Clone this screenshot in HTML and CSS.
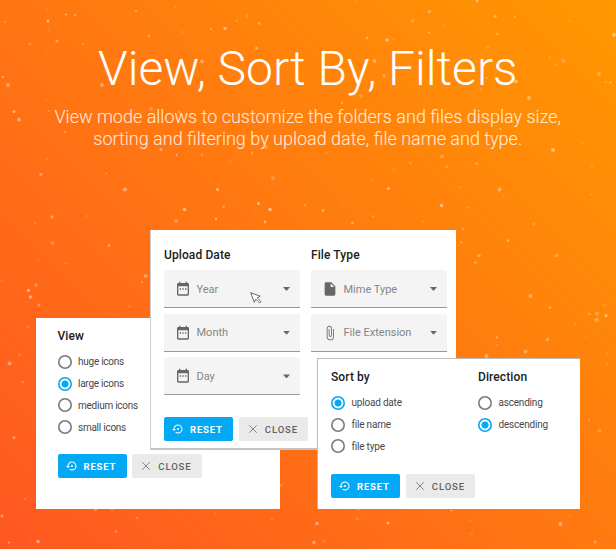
FILE: index.html
```html
<!DOCTYPE html>
<html lang="en">
<head>
<meta charset="utf-8">
<title>View, Sort By, Filters</title>
<link rel="stylesheet" href="styles.css">
</head>
<body>
<svg class="symbols" aria-hidden="true">
  <symbol id="reset" viewBox="0 0 24 24"><path d="M14 12a2 2 0 1 0-4 0 2 2 0 0 0 4 0zm-2-9a9 9 0 0 0-9 9H0l4 4 4-4H5a7 7 0 1 1 2.940 5.700l-1.420 1.440A9 9 0 1 0 12 3z"/></symbol>
  <symbol id="close" viewBox="0 0 24 24"><path d="M3 3L21 21M21 3L3 21" fill="none" stroke="currentColor" stroke-width="2.400"/></symbol>
  <symbol id="calendar" viewBox="0 0 24 24"><path d="M7 11h2v2H7zm4 0h2v2h-2zm4 0h2v2h-2zM19 3h-1V1h-2v2H8V1H6v2H5a2 2 0 0 0-2 2v15a2 2 0 0 0 2 2h14a2 2 0 0 0 2-2V5a2 2 0 0 0-2-2zm0 17H5V8h14z"/></symbol>
  <symbol id="file" viewBox="0 0 24 24"><path d="M13 9V3.500L18.500 9zM6 2a2 2 0 0 0-2 2v16a2 2 0 0 0 2 2h12a2 2 0 0 0 2-2V8l-6-6z"/></symbol>
  <symbol id="clip" viewBox="0 0 24 24"><path d="M16.500 6v11.500a4 4 0 0 1-8 0V5a2.500 2.500 0 0 1 5 0v10.500a1 1 0 0 1-2 0V6H10v9.500a2.500 2.500 0 0 0 5 0V5a4 4 0 0 0-8 0v12.500a5.500 5.500 0 0 0 11 0V6z"/></symbol>
</svg>
<main class="banner">
  <svg class="specks" width="616" height="549" aria-hidden="true"></svg>
  <header class="intro">
    <h1>View, Sort By, Filters</h1>
    <p>View mode allows to customize the folders and files display size,<br>sorting and filtering by upload date, file name and type.</p>
  </header>

  <section class="panel panel-view">
    <h2>View</h2>
    <div class="options">
      <div class="option"><i class="radio"></i>huge icons</div>
      <div class="option"><i class="radio on"></i>large icons</div>
      <div class="option"><i class="radio"></i>medium icons</div>
      <div class="option"><i class="radio"></i>small icons</div>
    </div>
    <div class="actions">
      <button class="btn primary"><svg><use href="#reset"/></svg>RESET</button>
      <button class="btn"><svg><use href="#close"/></svg>CLOSE</button>
    </div>
  </section>

  <section class="panel panel-filter">
    <div class="columns">
      <div class="fields">
        <h2>Upload Date</h2>
        <div class="field"><svg><use href="#calendar"/></svg><span>Year</span><b class="caret"></b></div>
        <div class="field"><svg><use href="#calendar"/></svg><span>Month</span><b class="caret"></b></div>
        <div class="field"><svg><use href="#calendar"/></svg><span>Day</span><b class="caret"></b></div>
      </div>
      <div class="fields">
        <h2>File Type</h2>
        <div class="field"><svg><use href="#file"/></svg><span>Mime Type</span><b class="caret"></b></div>
        <div class="field"><svg class="clip"><use href="#clip"/></svg><span>File Extension</span><b class="caret"></b></div>
      </div>
    </div>
    <div class="actions">
      <button class="btn primary"><svg><use href="#reset"/></svg>RESET</button>
      <button class="btn"><svg><use href="#close"/></svg>CLOSE</button>
    </div>
    <svg class="cursor" viewBox="0 0 12 12"><path d="M.7.7L10.200 4.200 7.200 5.800 11 9.600 9.700 11 5.900 7.200 4.300 10.200z"/></svg>
  </section>

  <section class="panel panel-sort">
    <div class="columns">
      <div>
        <h2>Sort by</h2>
        <div class="options">
          <div class="option"><i class="radio on"></i>upload date</div>
          <div class="option"><i class="radio"></i>file name</div>
          <div class="option"><i class="radio"></i>file type</div>
        </div>
      </div>
      <div>
        <h2>Direction</h2>
        <div class="options">
          <div class="option"><i class="radio"></i>ascending</div>
          <div class="option"><i class="radio on"></i>descending</div>
        </div>
      </div>
    </div>
    <div class="actions">
      <button class="btn primary"><svg><use href="#reset"/></svg>RESET</button>
      <button class="btn"><svg><use href="#close"/></svg>CLOSE</button>
    </div>
  </section>
</main>
<script src="specks.js"></script>
</body>
</html>
```
FILE: specks.js
```js
// Each speck: x, y, radius, opacity.
const specks = [
[5,22,1,.35],[30,44,1.5,.25],[48,21,1.5,.6],[47,9.500,.8,.35],[66,14.500,1,.55],[75,15,1,.6],[57,41,1.6,.45],[83,44,.8,.5],[136,11,1.1,.5],[149,36,1.2,.5],[49,30,1.2,.15],[46,51,.8,.25],
[3,77,1.2,.5],[8,85,1.9,.5],[14,111.500,1.6,.6],[19,119.500,1.9,.5],[46,100,.8,.3],[49,111,1,.35],[65,132,1.300,.35],[102,85,1.9,.4],[202,61.500,1.9,.45],[151,109,2,.3],[179,112,1.500,.3],
[175,7,1,.2],[182,32,1.600,.15],[211,29,1.200,.35],[225,28.500,1.700,.6],[237,21,1,.35],[247,16,2.100,.2],[259,23.500,1.400,.4],[256.500,48,1.500,.5],[161,149.500,1.600,.5],[176.500,155,.9,.6],[202,155,1,.4],[266,147,1.700,.4],[252,153,1.500,.35],[230,161,1,.2],
[47,159,1,.25],[41,174.500,1.800,.45],[64,169.500,.8,.2],[106.500,173.500,.8,.5],[125,189.500,2.100,.5],[144,213.500,.7,.4],[52,217,1.800,.45],[87,216,1,.25],[35,223,.9,.3],[176,221,2.100,.35],[184.500,209.500,1.700,.65],[217.500,189.500,1.500,.65],[223.500,206.500,1.500,.35],[216,219,1.200,.6],[273,178,2.200,.25],[258.500,203.500,1.500,.65],[270,209.500,1.800,.65],[265,222,1.400,.5],[305,205,1.500,.3],[256,210,1.500,.12],[272,200,1,.15],
[356,1.500,1,.2],[412.500,21,2,.3],[429.500,11.500,1.700,.4],[477,1,1.500,.5],[495,16.500,1.600,.5],[515,17,.9,.5],[569.500,21,.8,.4],[367,38,1.400,.45],[387,40,1.700,.6],[394,39.500,1,.3],[429,32.500,1,.6],[444,25.500,1.300,.2],[497.500,34,1.300,.4],[488,47.500,1.500,.3],[614,35,1.900,.6],
[374.500,61,1.900,.5],[384,75.500,1.500,.4],[361,96,2,.25],[342,103,1.200,.4],[331,120,1.500,.25],[549.500,57.500,.8,.5],[555.500,64.500,.9,.4],[563.500,61,2,.3],[599,74,2,.35],[606,82,1,.35],[610.500,82.500,1,.6],[516,81.500,1.900,.5],[480.500,90,1.200,.25],[487,78,1,.3],[529,98,2,.5],[500.500,129,.9,.6],[442,130,1,.25],[472,146,1.500,.2],[553,150,2,.6],[582.500,143,.8,.35],[542,119,.8,.4],[326,153,.9,.3],[442,156.500,2,.3],[410.500,163,1.500,.25],[446.500,166.500,1.200,.35],[476.500,163.500,1.600,.3],[468.500,167.500,.6,.35],[394,169.500,2,.12],[592,166.500,1.600,.15],[372.500,180,.9,.25],[341,182.500,.8,.25],[388.500,188.500,1.600,.6],[460.500,187.500,1.400,.2],[499.500,189.500,1.900,.45],[503.500,196,.8,.35],[591.500,194.500,.8,.4],[441.500,205.500,1.700,.65],[323,210.500,1.600,.45],[342,206.500,.8,.3],[373,216.500,1.400,.25],[423.500,221.500,.9,.3],[352.500,223,1.500,.45],
[52.500,243,2,.3],[109,245.500,1.200,.6],[65.500,263.500,1.200,.25],[38,260.500,1,.2],[2,280.500,.9,.3],[36,285,1.900,.3],[28.500,290.500,1.700,.6],[30.500,297,1.700,.6],[39,305,1.600,.4],[145.500,276,1.800,.55],[142,282,1.200,.35],[128.500,306.500,1.500,.15],[28,327,1.700,.2],[19.500,354.500,1.500,.2],[9.500,363.500,2,.5],[22.500,382,1.200,.4],[14,437.500,1.600,.5],[25,499,1.100,.3],[2,516,1.600,.5],[95.500,509.500,1.600,.4],[112,509,1.700,.25],[137,518,1.100,.4],[116,531.500,1.300,.35],[38,541.500,1.700,.6],[9,542.500,1.200,.5],[30.500,542.500,.8,.2],
[468,207.500,1.200,.3],[533.500,224,1.500,.3],[463,229,1.500,.35],[461.500,242.500,1.400,.3],[508,240.500,1.200,.55],[479,255.500,1.800,.4],[475.500,262.500,1.600,.3],[556.500,255.500,2,.35],[530.500,296,1.900,.45],[550,307.500,1.600,.35],[604.500,305.500,1.700,.2],[597,313.500,2.200,.3],[596.500,320,2.300,.35],[589.500,314,1.300,.4],[606,315.500,1.500,.6],[575.500,323.500,.8,.4],[585.500,338,.8,.3],[497,337.500,1.200,.5],[497,344.500,.9,.3],[547.500,339.500,1.700,.4],[525.500,351.500,1.900,.45],[486.500,356,2,.5],[607.500,353.500,1.600,.15],[607,364,1.400,.15],
[589,420.500,.9,.35],[599.500,430.500,2,.3],[598.500,475,.8,.15],[281,485.500,1.300,.3],[300.500,479,.8,.2],[215.500,513.500,.7,.4],[357.500,518.500,1.500,.25],[358,509.500,1.400,.25],[317,523.500,1.800,.55],[388,523,1.500,.6],[314,542.500,1.900,.5],[324,541,1.700,.2],[451.500,510.500,.9,.5],[470.500,521,.9,.25],[471.500,533.500,2,.12],[560.500,524,2,.5],[569.500,516,.9,.25],[595,542,1.700,.35],[272,519,1.800,.15]
];
const svg = document.querySelector('.specks');
for (const [cx, cy, r, opacity] of specks) {
  const dot = document.createElementNS('http://www.w3.org/2000/svg', 'circle');
  for (const [name, value] of Object.entries({ cx, cy, r, opacity: opacity * 0.75 })) dot.setAttribute(name, value);
  svg.append(dot);
}
```
FILE: styles.css
```css
* { box-sizing: border-box; }
body { margin: 0; font-family: Roboto, "Liberation Sans", sans-serif; }
h1, h2, p { margin: 0; }
.symbols { display: none; }
.banner {
  position: relative;
  width: 616px;
  height: 549px;
  overflow: hidden;
  background: linear-gradient(45deg, #ff5722, #ff9800);
}
.specks { position: absolute; inset: 0; fill: #fff; }
.intro { padding: 41px .5px 0 0; text-align: center; color: #fff; }
.intro h1 { font-size: 48px; line-height: 56px; font-weight: 300; white-space: nowrap; }
.intro p {
  margin-top: 9px;
  font-size: 18px;
  line-height: 22px;
  font-weight: 300;
  color: rgba(255, 255, 255, .8);
  -webkit-text-stroke: .2px rgba(255, 255, 255, .5);
  white-space: nowrap;
}
.panel { position: absolute; background: #fff; color: #212121; }
.panel-view { left: 36px; top: 318px; width: 244px; height: 191px; padding: 9px 21.500px; }
.panel-filter {
  left: 150px; top: 230px; width: 306px; height: 220px;
  padding: 16px 9px 0 13px;
  border-left: 1px solid #ccc;
  border-bottom: 2px solid #c4c4c4;
}
.panel-sort {
  left: 317px; top: 358px; width: 263px; height: 151px;
  padding: 9px 13px;
  border-left: 1px solid #bbb;
  border-top: 1px solid #bbb;
}
h2 { font-size: 12px; line-height: 18px; font-weight: 500; letter-spacing: .1px; }
.columns { display: grid; }
.panel-filter .columns { grid-template-columns: 136px 136px; gap: 11px; }
.panel-sort .columns { grid-template-columns: 147px 1fr; height: 106px; }
.options { margin-top: 6px; }
.option {
  display: flex;
  align-items: center;
  gap: 6.500px;
  height: 21.800px;
  font-size: 10px;
  letter-spacing: -.2px;
  color: #484848;
}
.panel-view .option { letter-spacing: -.25px; }
.radio {
  width: 14px;
  height: 14px;
  border-radius: 50%;
  box-shadow: inset 0 0 0 1.600px #7a7a7a;
}
.radio.on { box-shadow: inset 0 0 0 1.600px #03a9f4; background: radial-gradient(circle, #03a9f4 3.200px, #fff 3.900px); }
.actions { display: flex; gap: 5.500px; }
.panel-view .actions { margin-top: 16px; }
.panel-filter .actions { margin-top: 16px; }
.btn {
  display: flex;
  align-items: center;
  gap: 6px;
  width: 69.300px;
  height: 24px;
  padding: 0 0 0 8px;
  border: 0;
  border-radius: 2px;
  background: #eaeaea;
  color: #616161;
  font: 500 9.500px Roboto, sans-serif;
  letter-spacing: .9px;
}
.btn svg { width: 12px; height: 12px; fill: currentColor; }
.btn:not(.primary) { padding-left: 9px; gap: 7px; }
.btn:not(.primary) svg { width: 10px; height: 10px; color: #858585; }
.btn.primary { background: #03a9f4; color: #fff; font-weight: 700; letter-spacing: .8px; }
.fields h2 { margin-bottom: 6px; }
.field {
  display: flex;
  align-items: center;
  height: 38px;
  margin-bottom: 5.700px;
  padding: 1px 10px 0 11px;
  border-bottom: 1px solid #999;
  border-radius: 3px 3px 0 0;
  background: #f4f4f4;
  color: #858585;
  font-size: 11px;
}
.field svg { width: 16px; height: 16px; fill: #666; }
.field .clip { fill: #857970; }
.field span { flex: 1; margin-left: 5.500px; }
.caret {
  width: 7px;
  height: 4px;
  background: #666;
  clip-path: polygon(0 0, 100% 0, 50% 100%);
}
.cursor { position: absolute; left: 99px; top: 62px; width: 12px; height: 12px; fill: #fff; stroke: #555; stroke-width: .9; }
```
